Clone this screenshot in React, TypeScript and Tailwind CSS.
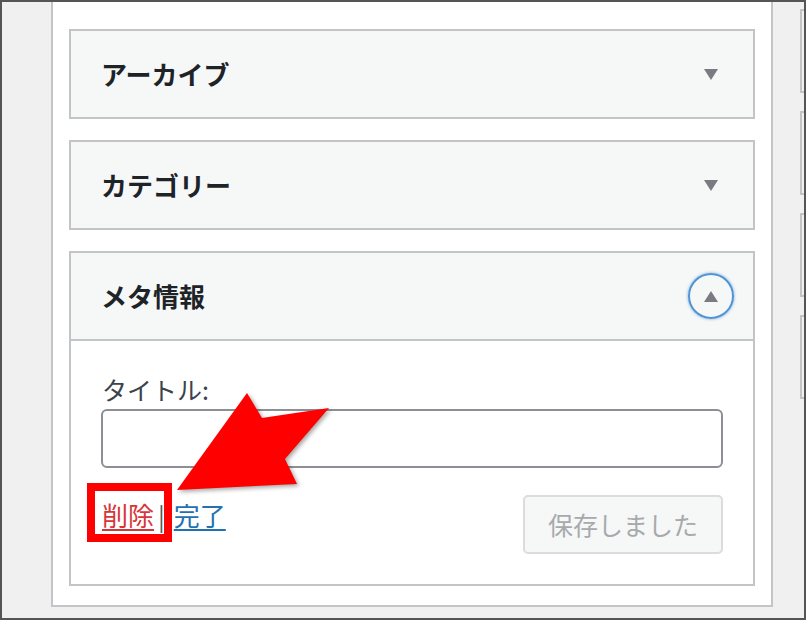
const jp = "font-['Noto_Sans_CJK_JP','Noto_Sans',sans-serif]";

function Triangle({ up }: { up?: boolean }) {
  return (
    <svg width="14" height="11" viewBox="0 0 14 11">
      <path d={up ? "M7 0 L14 11 L0 11 Z" : "M0 0 L14 0 L7 11 Z"} fill="#787c82" />
    </svg>
  );
}

function Header({ title, open }: { title: string; open?: boolean }) {
  return (
    <div className="flex h-[86px] items-center justify-between bg-[#f6f7f7] pl-[30px] pr-[19px]">
      <span className="text-[26px] font-bold leading-none text-[#1d2327]">{title}</span>
      <div
        className={
          open
            ? "flex h-[46px] w-[46px] items-center justify-center rounded-full border-2 border-[#4f94d4] shadow-[0_0_3px_rgba(79,148,212,0.8)]"
            : "flex h-[46px] w-[46px] items-center justify-center"
        }
      >
        <Triangle up={open} />
      </div>
    </div>
  );
}

export default function App() {
  return (
    <div className={`relative flex h-[620px] w-[806px] overflow-hidden border-2 border-[#555] bg-[#f0f0f1] ${jp}`}>
      {/* widget area */}
      <div className="ml-[49px] h-[605px] w-[722px] shrink-0 border-x-2 border-b-2 border-[#c3c4c7] bg-white px-[16px] pt-[27px]">
        <div className="flex flex-col gap-[21px]">
          <div className="border-2 border-[#c3c4c7]">
            <Header title="アーカイブ" />
          </div>
          <div className="border-2 border-[#c3c4c7]">
            <Header title="カテゴリー" />
          </div>
          <div className="border-2 border-[#c3c4c7]">
            <Header title="メタ情報" open />
            <div className="border-t-2 border-[#c3c4c7] px-[30px] pb-[30px] pt-[31px]">
              <div className="mb-[3px] pl-[1px] text-[25px] leading-[34px] text-[#3c434a]">タイトル:</div>
              <div className="h-[59px] w-full rounded-[6px] border-2 border-[#8c8f94] bg-white" />
              <div className="mt-[27px] flex items-start justify-between">
                <div className="flex items-center pl-[1px] text-[26px] leading-[40px]">
                  <span className="text-[#d63638] underline underline-offset-[3px]">削除</span>
                  <span className="ml-[4px] mr-[9px] text-[25px] text-[#50575e]">|</span>
                  <span className="text-[#2271b1] underline underline-offset-[3px]">完了</span>
                </div>
                <div className="flex h-[59px] w-[200px] items-center justify-center rounded-[5px] border-2 border-[#dcdcde] bg-[#f6f7f7] text-[25px] text-[#a7aaad]">
                  保存しました
                </div>
              </div>
            </div>
          </div>
        </div>
      </div>

      {/* next column, cut off */}
      <div className="ml-[27px] flex shrink-0 flex-col gap-[18px] pt-[7px]">
        {[0, 1, 2, 3].map((i) => (
          <div key={i} className="h-[84px] w-[20px] border-y-2 border-l-2 border-[#c3c4c7]" />
        ))}
      </div>

      {/* annotation: red box */}
      <div className="absolute left-[85px] top-[481px] h-[59px] w-[85px] border-[8px] border-[#ff0000]" />

      {/* annotation: arrow */}
      <svg
        className="absolute left-[158px] top-[378px] drop-shadow-[2px_2px_2px_rgba(0,0,0,0.35)]"
        width="180"
        height="120"
        viewBox="0 0 180 120"
      >
        <polygon points="17,110 87,13 102,38 169,28 125,79 137,104" fill="#ff0000" />
      </svg>
    </div>
  );
}
